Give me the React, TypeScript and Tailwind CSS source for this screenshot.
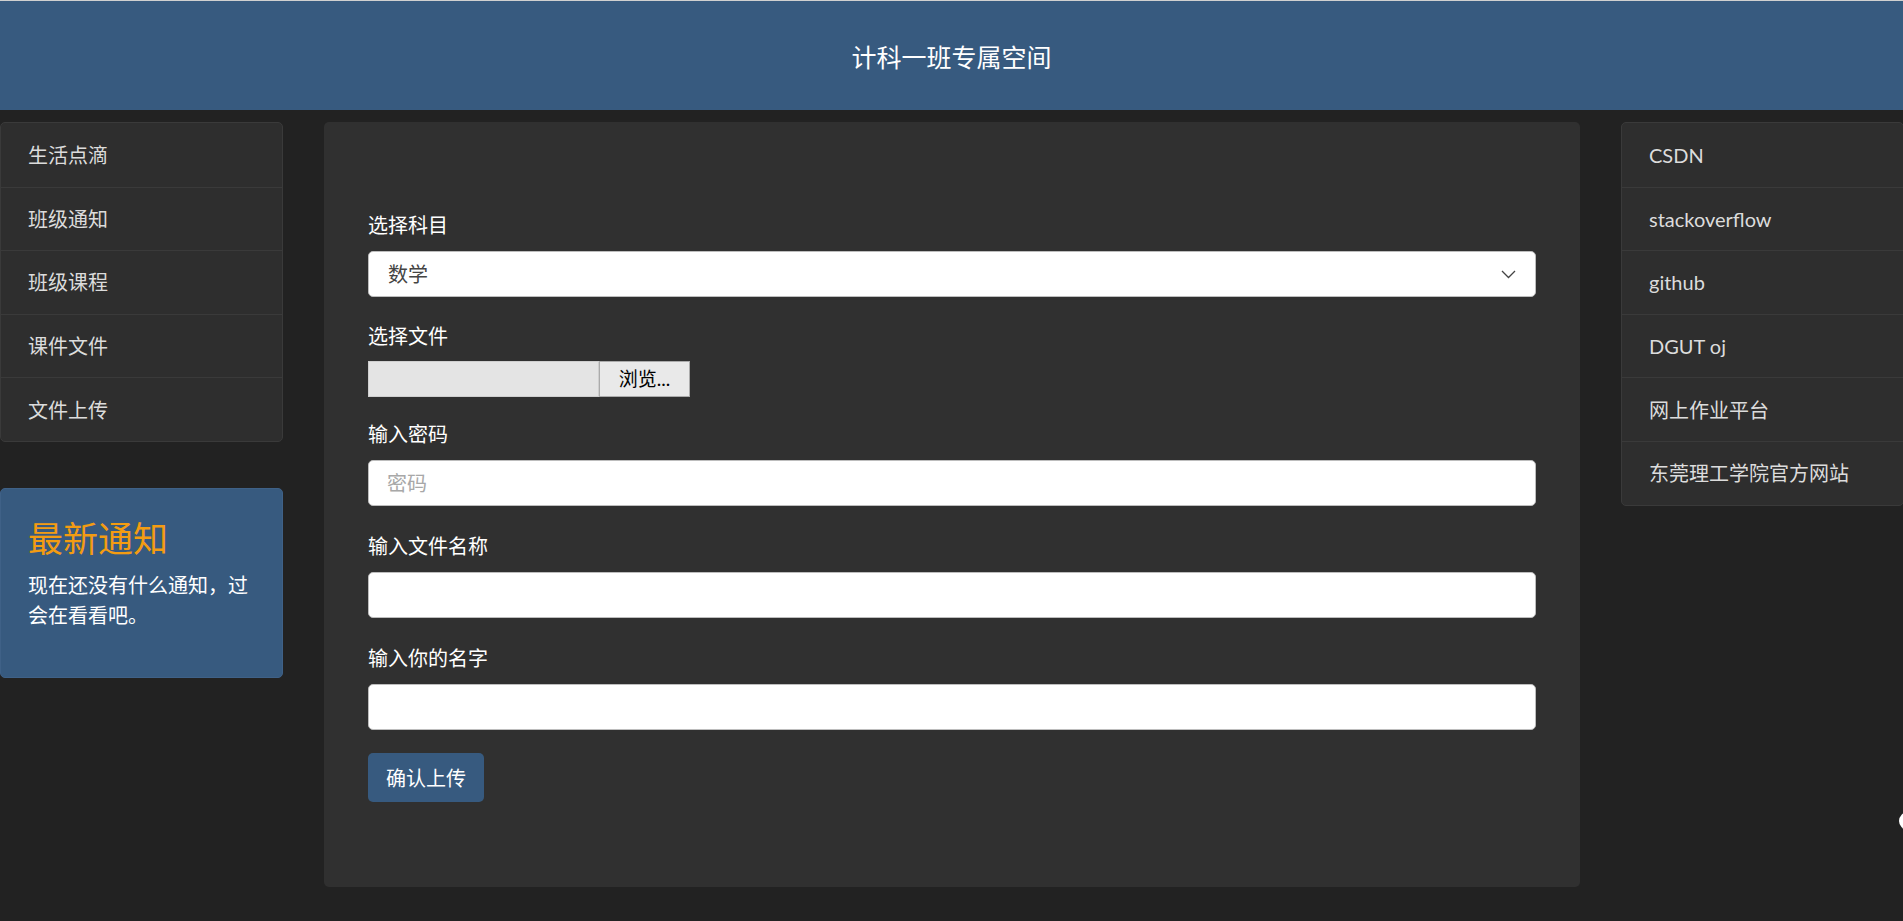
import React from "react";

const leftLinks = ["生活点滴", "班级通知", "班级课程", "课件文件", "文件上传"];
const rightLinks = [
  "CSDN",
  "stackoverflow",
  "github",
  "DGUT oj",
  "网上作业平台",
  "东莞理工学院官方网站",
];

function LinkList({ items }: { items: string[] }) {
  return (
    <ul className="overflow-hidden rounded-[5px] border border-[#3a3a3a] bg-[#2e2e2e]">
      {items.map((item, i) => (
        <li
          key={item}
          className={`flex h-[63.6px] items-center px-[27px] text-[20px] text-[#dcdcdc] ${i > 0 ? "border-t border-[#3a3a3a]" : ""}`}
        >
          {item}
        </li>
      ))}
    </ul>
  );
}

function Label({ children }: { children: React.ReactNode }) {
  return <label className="block text-[20px] leading-[30px] text-white">{children}</label>;
}

function TextInput({ placeholder, type = "text" }: { placeholder?: string; type?: string }) {
  return (
    <input
      type={type}
      placeholder={placeholder}
      className="mt-[11px] block h-[46px] w-full rounded-[5px] border border-[#bdbdbd] bg-white px-[18px] text-[20px] text-[#444] placeholder:text-[#a8a8a8] outline-none"
    />
  );
}

export default function App() {
  return (
    <div
      className="relative min-h-[921px] w-full overflow-hidden bg-[#222222]"
      style={{ fontFamily: 'Lato, "Noto Sans CJK SC", "Noto Sans", sans-serif' }}
    >
      <header className="flex h-[110px] items-center justify-center border-t border-[#d0d0d0] bg-[#375a7f] pt-[5px]">
        <h1 className="text-[25px] text-white">计科一班专属空间</h1>
      </header>

      <div className="mt-[12px] grid w-[1904px] grid-cols-[283px_1256px_283px] gap-x-[41px]">
        <aside>
          <LinkList items={leftLinks} />
          <div className="mt-[46px] h-[190px] rounded-[5px] border border-[#3f6187] bg-[#375a7f] px-[27px] pt-[28px]">
            <h3 className="text-[35px] leading-[42px] text-[#f39c12]">最新通知</h3>
            <p className="mt-[11px] text-[20px] leading-[30px] text-white">
              现在还没有什么通知，过会在看看吧。
            </p>
          </div>
        </aside>

        <main className="h-[765px] rounded-[5px] bg-[#303030] px-[44px] pt-[88px]">
          <div>
            <Label>选择科目</Label>
            <div className="mt-[11px] flex h-[46px] w-full items-center justify-between rounded-[5px] border border-[#bdbdbd] bg-white pl-[19px] pr-[19px] text-[20px] text-[#444]">
              <span>数学</span>
              <svg width="15" height="9" viewBox="0 0 15 9" fill="none">
                <path d="M1 1l6.5 6.5L14 1" stroke="#444" strokeWidth="1.3" />
              </svg>
            </div>
          </div>

          <div className="mt-[24px]">
            <Label>选择文件</Label>
            <div className="mt-[10px] flex h-[36px] w-[322px]">
              <div className="w-[231px] border border-[#cfcfcf] bg-[#e4e4e4]" />
              <button className="w-[91px] border border-[#ababab] bg-[#e9e9e9] text-[19px] text-black">
                浏览...
              </button>
            </div>
          </div>

          <div className="mt-[22px]">
            <Label>输入密码</Label>
            <TextInput type="password" placeholder="密码" />
          </div>

          <div className="mt-[25px]">
            <Label>输入文件名称</Label>
            <TextInput />
          </div>

          <div className="mt-[25px]">
            <Label>输入你的名字</Label>
            <TextInput />
          </div>

          <button className="mt-[23px] h-[49px] rounded-[5px] bg-[#375a7f] px-[18px] text-[20px] text-white">
            确认上传
          </button>
        </main>

        <aside>
          <LinkList items={rightLinks} />
        </aside>
      </div>

      <div className="absolute left-[1899px] top-[812px] h-[18px] w-[18px] rounded-full bg-white" />
    </div>
  );
}
